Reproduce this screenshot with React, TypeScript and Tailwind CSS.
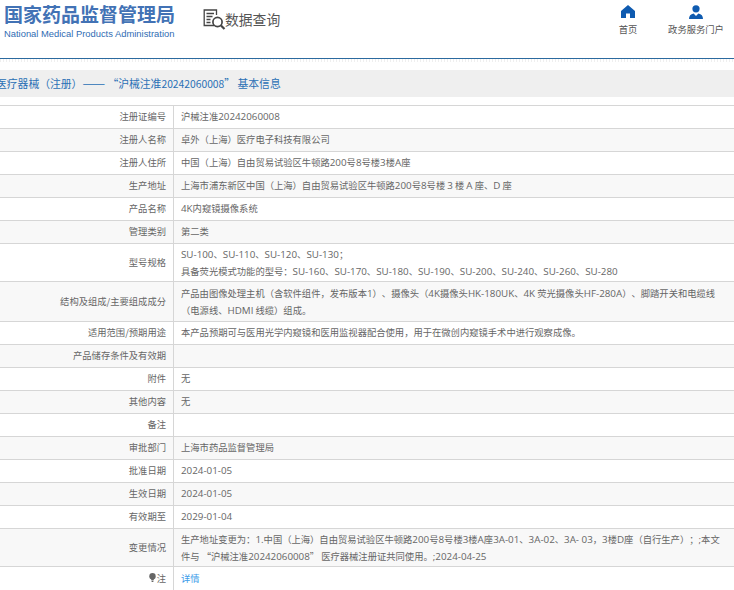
interface Row {
  label: string;
  lines?: string[];
  height: string;
}

const rows: Row[] = [
  { label: '注册证编号', lines: ['沪械注准20242060008'], height: 'h-[23px]' },
  { label: '注册人名称', lines: ['卓外（上海）医疗电子科技有限公司'], height: 'h-[23px]' },
  { label: '注册人住所', lines: ['中国（上海）自由贸易试验区牛顿路200号8号楼3楼A座'], height: 'h-[23px]' },
  { label: '生产地址', lines: ['上海市浦东新区中国（上海）自由贸易试验区牛顿路200号8号楼 3 楼 A 座、D 座'], height: 'h-[23px]' },
  { label: '产品名称', lines: ['4K内窥镜摄像系统'], height: 'h-[23px]' },
  { label: '管理类别', lines: ['第二类'], height: 'h-[23px]' },
  {
    label: '型号规格',
    lines: ['SU-100、SU-110、SU-120、SU-130；', '具备荧光模式功能的型号：SU-160、SU-170、SU-180、SU-190、SU-200、SU-240、SU-260、SU-280'],
    height: 'h-[38px]',
  },
  {
    label: '结构及组成/主要组成成分',
    lines: ['产品由图像处理主机（含软件组件，发布版本1）、摄像头（4K摄像头HK-180UK、4K 荧光摄像头HF-280A）、脚踏开关和电缆线', '（电源线、HDMI 线缆）组成。'],
    height: 'h-[40px]',
  },
  { label: '适用范围/预期用途', lines: ['本产品预期可与医用光学内窥镜和医用监视器配合使用，用于在微创内窥镜手术中进行观察成像。'], height: 'h-[23px]' },
  { label: '产品储存条件及有效期', height: 'h-[23px]' },
  { label: '附件', lines: ['无'], height: 'h-[23px]' },
  { label: '其他内容', lines: ['无'], height: 'h-[23px]' },
  { label: '备注', height: 'h-[23px]' },
  { label: '审批部门', lines: ['上海市药品监督管理局'], height: 'h-[23px]' },
  { label: '批准日期', lines: ['2024-01-05'], height: 'h-[23px]' },
  { label: '生效日期', lines: ['2024-01-05'], height: 'h-[23px]' },
  { label: '有效期至', lines: ['2029-01-04'], height: 'h-[23px]' },
  {
    label: '变更情况',
    lines: ['生产地址变更为：1.中国（上海）自由贸易试验区牛顿路200号8号楼3楼A座3A-01、3A-02、3A- 03，3楼D座（自行生产）；;本文', '件与 “沪械注准20242060008” 医疗器械注册证共同使用。;2024-04-25'],
    height: 'h-[38px]',
  },
  { label: '注', height: 'h-[24px]' },
];

// latin runs sit a little wider than the cjk around them
function MixedText({ text }: { text: string }) {
  const parts = text.split(/([A-Za-z0-9.;-]+(?: [A-Za-z0-9.;-]+)*)/);
  return (
    <>
      {parts.map((part, i) =>
        i % 2 === 1 ? (
          <span key={i} className="text-[9.8px] font-['Open_Sans',sans-serif]">
            {part}
          </span>
        ) : (
          <span key={i}>{part}</span>
        ),
      )}
    </>
  );
}

function SearchDocIcon() {
  return (
    <svg width="23" height="22" viewBox="0 0 23 22" fill="none" stroke="#444" strokeWidth="1.3">
      <path d="M11 16.5H1.2V1h12.3v5" />
      <path d="M3.5 4.5h7.5M3.500 7.5h6M3.5 10.5h4M3.5 13.5h4" />
      <circle cx="14.500" cy="13" r="4.6" strokeWidth="1.7" />
      <path d="M18 16.5l3.5 3.5" strokeWidth="2.2" />
    </svg>
  );
}

function HomeIcon() {
  return (
    <svg width="14" height="13" viewBox="0 0 14 13" fill="#0f5bb0">
      <path d="M7 0L0 6v7h5V8.500h4V13h5V6z" />
    </svg>
  );
}

function UserIcon() {
  return (
    <svg width="14" height="14" viewBox="0 0 14 14" fill="#0f5bb0">
      <circle cx="7" cy="3.800" r="3.600" />
      <path d="M0 14c0-3.400 1.600-5 4.600-5.600L7 11l2.400-2.600C12.400 9 14 10.600 14 14z" />
    </svg>
  );
}

function BulbIcon() {
  return (
    <svg width="7" height="9" viewBox="0 0 7 9" fill="#666" className="mr-[1px]">
      <circle cx="3.500" cy="3.200" r="3.200" />
      <path d="M2.200 6h2.600v1.200H2.200zM2.600 7.800h1.800V9H2.600z" />
    </svg>
  );
}

export default function App() {
  return (
    <div className="h-[590px] w-[734px] overflow-hidden bg-white font-['Noto_Sans_CJK_SC',sans-serif] [text-spacing-trim:space-all]">
      {/* top header */}
      <div className="flex h-[59px] border-b border-[#2b6a9f]">
        <div className="ml-[4px] mt-[3px] w-[172px]">
          <div className="whitespace-nowrap text-[19px] leading-[22px] font-bold text-[#4272b5]">
            国家药品监督管理局
          </div>
          <div className="mt-[3px] whitespace-nowrap text-[9.4px] leading-[11px] text-[#2f6cb3] font-['Liberation_Sans',sans-serif]">
            National Medical Products Administration
          </div>
        </div>
        <div className="ml-[27px] mt-[9px] flex h-[22px] items-start">
          <SearchDocIcon />
          <span className="-ml-[1px] text-[13.800px] leading-[20px] text-[#555]">数据查询</span>
        </div>
        <div className="ml-auto mt-[5px] flex">
          <div className="flex w-[40px] flex-col items-center">
            <HomeIcon />
            <span className="mt-[4px] text-[9.3px] leading-[14px] text-[#555]">首页</span>
          </div>
          <div className="ml-[20px] mr-[10px] flex w-[56px] flex-col items-center">
            <UserIcon />
            <span className="mt-[3px] whitespace-nowrap text-[9.3px] leading-[14px] text-[#555]">政务服务门户</span>
          </div>
        </div>
      </div>
      <div className="h-[3px] bg-[repeating-linear-gradient(90deg,#efefef_0,#efefef_1px,#fff_1px,#fff_3px)]" />

      {/* section title */}
      <div className="mt-[8px] flex h-[27px] items-center whitespace-nowrap bg-[#efefef] pb-[2px] text-[10.8px] text-[#2a6fb5]">
        <span className="-ml-[4px]">
          医疗器械（注册）<span className="text-[13.5px]">——</span> “沪械注准<span className="text-[10.3px]">20242060008</span>” 基本信息
        </span>
      </div>

      {/* detail rows */}
      <div className="mt-[8px] text-[9.3px] leading-[16px] text-[#666]">
        {rows.map((row, i) => (
          <div
            key={row.label}
            className={`flex border-t border-[#d6d6d6] ${row.height} ${i % 2 === 1 ? 'bg-[#f8f8f8]' : 'bg-white'}`}
          >
            <div className="flex w-[174px] shrink-0 items-center justify-end border-r border-[#d6d6d6] pb-[2px] pr-[7px]">
              {row.label === '注' && <BulbIcon />}
              {row.label}
            </div>
            <div className={`flex items-center whitespace-nowrap pl-[7px] ${row.lines?.length === 2 ? '' : 'pb-[2px]'}`}>
              <div>
                {row.lines?.map((line) => (
                  <div key={line}>
                    <MixedText text={line} />
                  </div>
                ))}
                {row.label === '注' && <span className="text-[#3d9be9]">详情</span>}
              </div>
            </div>
          </div>
        ))}
      </div>
    </div>
  );
}
